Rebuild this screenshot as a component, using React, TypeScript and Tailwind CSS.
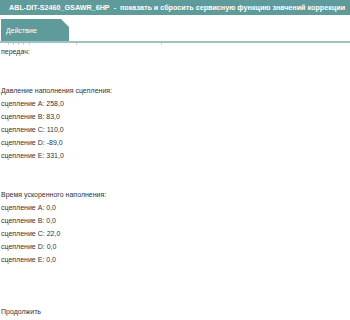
import React from 'react';

const pressure = [
  { label: 'сцепление A', value: '258,0' },
  { label: 'сцепление B', value: '83,0' },
  { label: 'сцепление C', value: '110,0' },
  { label: 'сцепление D', value: '-89,0' },
  { label: 'сцепление E', value: '331,0' },
];

const fastFill = [
  { label: 'сцепление A', value: '0,0' },
  { label: 'сцепление B', value: '0,0' },
  { label: 'сцепление C', value: '22,0' },
  { label: 'сцепление D', value: '0,0' },
  { label: 'сцепление E', value: '0,0' },
];

// остатки обрезанной строки над "передач:"
const marks = [7, 12, 17, 22, 28, 75, 160];

const Blank = () => <div className="h-[13px]" />;

export default function App() {
  return (
    <div className="w-[350px] h-[320px] overflow-hidden bg-white font-['Liberation_Sans',Arial,sans-serif]">
      {/* заголовок */}
      <div className="h-[15px] bg-[#5f9b9b] text-white font-bold text-[7.2px] leading-[15px] pl-[9px] whitespace-nowrap">
        ABL-DIT-S2460_GSAWR_6HP&nbsp; - &nbsp;показать и сбросить сервисную функцию значений коррекции
      </div>

      {/* вкладки */}
      <div className="mt-[4px] h-[24px] border-b-2 border-[#9cc2c2] flex">
        <div className="ml-[1px] w-[68px] h-full bg-[#5f9b9b] text-white text-[7px] leading-[22px] pl-[5px] pt-[1px] [clip-path:polygon(0_0,60px_0,68px_8px,68px_100%,0_100%)]">
          Действие
        </div>
      </div>

      {/* содержимое */}
      <div className="pl-[1px] text-[7px] leading-[13px] text-[#333]">
        <svg width="350" height="2" className="block">
          {marks.map((x) => (
            <rect key={x} x={x} y={0} width={1} height={1.5} fill="#c4c4c4" />
          ))}
        </svg>
        <div>передач:</div>
        <Blank />
        <Blank />
        <div>Давление наполнения сцепления:</div>
        {pressure.map((p) => (
          <div key={p.label}>
            {p.label}: {p.value}
          </div>
        ))}
        <Blank />
        <Blank />
        <div>Время ускоренного наполнения:</div>
        {fastFill.map((p) => (
          <div key={p.label}>
            {p.label}: {p.value}
          </div>
        ))}
        <Blank />
        <Blank />
        <Blank />
        <div>Продолжить</div>
      </div>
    </div>
  );
}
